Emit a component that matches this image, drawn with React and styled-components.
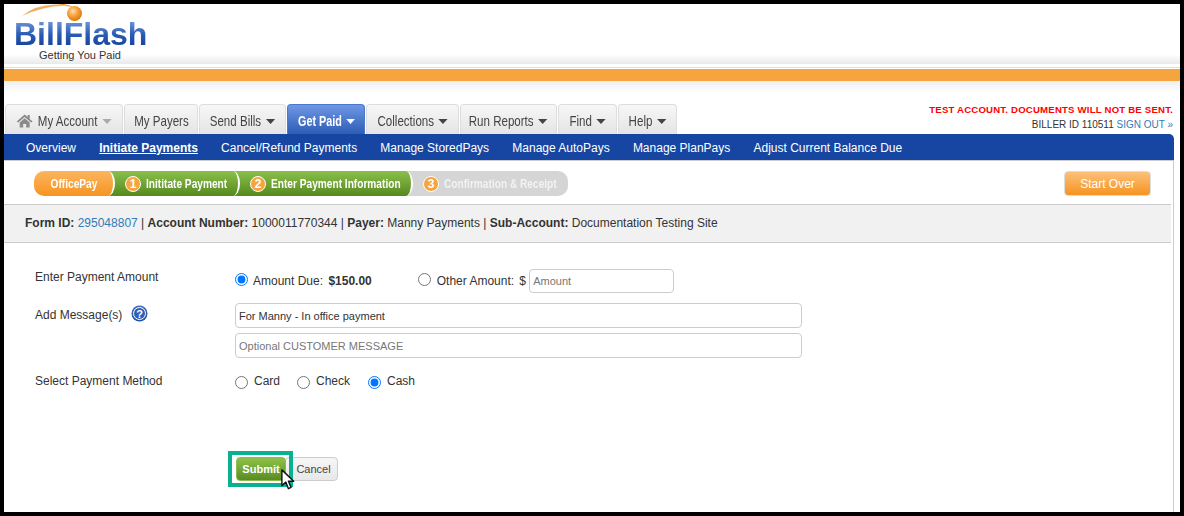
import React from 'react';
import styled, { createGlobalStyle } from 'styled-components';

const Global = createGlobalStyle`
  html, body { margin: 0; padding: 0; background: #fff; }
  body { font-family: "Liberation Sans", Arial, sans-serif; color: #333; }
`;

const Frame = styled.div`
  box-sizing: border-box;
  width: 1184px;
  height: 516px;
  border: 4px solid #000;
  overflow: hidden;
  position: relative;
  background: #fff;
`;

const Header = styled.header`
  height: 60px;
  padding-left: 10px;
  background: linear-gradient(#fff 84%, #e9e9e9 100%);
`;

const Logo = styled.div`
  position: relative;
  width: 140px;
  height: 60px;
`;

const LogoSwoosh = styled.svg`
  position: absolute;
  left: 0;
  top: 0;
`;

const LogoWord = styled.div`
  position: absolute;
  left: 0;
  top: 16px;
  font-size: 32px;
  font-weight: 700;
  line-height: 29px;
  background: linear-gradient(#6f93d8 5%, #2a5cb5 50%, #123c95 100%);
  -webkit-background-clip: text;
  background-clip: text;
  color: transparent;
`;

const LogoTag = styled.div`
  position: absolute;
  left: 25px;
  top: 46px;
  font-size: 11px;
  line-height: 11px;
  color: #333;
`;

const OrangeBar = styled.div`
  height: 12px;
  margin-top: 4px;
  background: #f6a53e;
  border-top: 1px solid #fff;
  box-shadow: 0 1px 0 #ddd, 0 -1px 0 #ddd;
`;

const TopArea = styled.div`
  display: flex;
  justify-content: space-between;
  align-items: flex-end;
  height: 53px;
  background: linear-gradient(#eee 0, #fff 12px);
`;

const Tabs = styled.nav`
  display: flex;
  gap: 1px;
  padding-left: 1px;
`;

const Tab = styled.div`
  box-sizing: border-box;
  width: ${p => p.$w}px;
  height: 30px;
  display: flex;
  align-items: center;
  justify-content: center;
  border: 1px solid ${p => (p.$active ? '#4a78cf' : '#ddd')};
  border-bottom: 0;
  border-radius: 4px 4px 0 0;
  font-size: 15px;
  padding-top: 2px;
  color: ${p => (p.$active ? '#fff' : '#444')};
  background: ${p =>
    p.$active
      ? 'linear-gradient(#6f97e4, #2d5db6)'
      : 'linear-gradient(#f7f7f7, #e4e4e4)'};
  font-weight: ${p => (p.$active ? 700 : 400)};
`;

/* the original tab font is a condensed one, none is installed */
const TabLabel = styled.span`
  flex: none;
  display: inline-flex;
  align-items: center;
  gap: 6px;
  white-space: nowrap;
  transform: scaleX(${p => (p.$active ? 0.72 : 0.77)});
`;

const Caret = styled.span`
  width: 0;
  height: 0;
  margin-top: 1px;
  border-left: 6.5px solid transparent;
  border-right: 6.5px solid transparent;
  border-top: 5px solid ${p => p.$color || '#444'};
`;

const AccountInfo = styled.div`
  width: 270px;
  padding-right: 7px;
  margin-bottom: 1px;
  text-align: right;
  font-size: 10px;
  line-height: 16px;
  color: #333;
`;

const Warning = styled.div`
  margin-bottom: -1px;
  color: #f00;
  font-weight: 700;
  font-size: 9.6px;
  letter-spacing: 0.2px;
`;

const Link = styled.a`
  color: #337ab7;
`;

const SubNav = styled.nav`
  box-sizing: border-box;
  width: 1170px;
  height: 27px;
  display: flex;
  align-items: center;
  gap: 23.2px;
  padding: 1px 0 0 22px;
  background: #1746a2;
  border-bottom: 1px solid #ccc;
  border-radius: 0 5px 0 0;
`;

const SubItem = styled.a`
  color: #fff;
  font-size: 12px;
  font-weight: ${p => (p.$active ? 700 : 400)};
  text-decoration: ${p => (p.$active ? 'underline' : 'none')};
`;

const Content = styled.main`
  box-sizing: border-box;
  width: 1170px;
  height: 400px;
  border-right: 1px solid #ccc;
  padding-top: 10px;
`;

const StepRow = styled.div`
  display: flex;
  align-items: center;
  justify-content: space-between;
  height: 25px;
  padding: 0 22px 0 30px;
`;

const Steps = styled.div`
  display: flex;
  width: 534px;
  height: 25px;
  border-radius: 10px;
  overflow: hidden;
  font-size: 13px;
  font-weight: 700;
  color: #fff;
`;

const stepBg = {
  orange: 'linear-gradient(#fcb55f, #f69420)',
  green: 'linear-gradient(#8cc04a, #55891f)',
  grey: '#d5d5d5',
};

const Step = styled.div`
  box-sizing: border-box;
  position: relative;
  z-index: ${p => p.$z};
  flex: ${p => (p.$w ? `0 0 ${p.$w}px` : '1')};
  min-width: 0;
  display: flex;
  align-items: center;
  justify-content: ${p => (p.$center ? 'center' : 'flex-start')};
  gap: 5px;
  margin-left: ${p => (p.$first ? 0 : -10)}px;
  padding-left: ${p => (p.$first ? 0 : 20)}px;
  background: ${p => stepBg[p.$tone]};
  color: ${p => (p.$tone === 'grey' ? '#f2f2f2' : '#fff')};
  border-right: ${p => (p.$last ? 0 : '2px solid #fff')};
  border-radius: ${p => (p.$last ? 0 : '0 7px 7px 0 / 0 50% 50% 0')};
`;

const StepText = styled.span`
  flex: none;
  white-space: nowrap;
  transform-origin: ${p => (p.$center ? 'center' : 'left')};
  transform: scaleX(0.78);
`;

const StepNum = styled.span`
  flex: none;
  width: 14px;
  height: 14px;
  border-radius: 50%;
  background: #f6a53e;
  border: 1px solid #fff;
  font-size: 12px;
  line-height: 14px;
  text-align: center;
  color: #fff;
`;

const StartOver = styled.button`
  box-sizing: border-box;
  width: 87px;
  height: 25px;
  margin-left: auto;
  border: 1px solid #ddd;
  border-radius: 4px;
  background: linear-gradient(#fcc07a, #f69420);
  color: #fff;
  font-family: inherit;
  font-size: 12px;
  padding: 0;
`;

const InfoBar = styled.div`
  box-sizing: border-box;
  width: 1167px;
  height: 39px;
  margin-top: 8px;
  display: flex;
  align-items: center;
  padding: 0 0 2px 21px;
  background: #f1f1f1;
  border-top: 1px solid #ccc;
  border-bottom: 1px solid #ccc;
  font-size: 12px;
  color: #333;
  white-space: pre;
`;

const Form = styled.form`
  display: grid;
  grid-template-columns: 200px 1fr;
  padding: 26px 0 0 31px;
  font-size: 12px;
  color: #333;
`;

const Label = styled.div`
  display: flex;
  align-items: center;
  gap: 8px;
  height: 16px;
  line-height: 16px;
  margin-top: ${p => p.$mt || 0}px;
`;

const Field = styled.div`
  display: flex;
  align-items: center;
  margin-top: ${p => p.$mt || 0}px;
`;

const MessageFields = styled.div`
  display: flex;
  flex-direction: column;
  align-items: flex-start;
  gap: 5px;
  margin-top: 10px;
`;

const RadioWrap = styled.label`
  display: flex;
  align-items: center;
  gap: ${p => p.$gap || 6}px;
  margin-right: ${p => p.$mr || 0}px;
`;

const RadioDot = styled.input.attrs({ type: 'radio' })`
  width: 13px;
  height: 13px;
  margin: ${p => (p.$raised ? '0 0 3px' : '4px 0 0')};
  accent-color: #0075ff;
`;

const Amount = styled.b`
  margin-left: 2px;
`;

const TextBox = styled.input`
  box-sizing: border-box;
  width: ${p => p.$w}px;
  height: ${p => p.$h || 25}px;
  padding: 0 3px;
  border: 1px solid #ccc;
  border-radius: 4px;
  font-family: inherit;
  font-size: 11px;
  color: #333;
  outline: none;
  &::placeholder { color: #777; opacity: 1; }
`;

const Buttons = styled.div`
  display: flex;
  align-items: center;
  margin: 68px 0 0 232px;
  position: relative;
  width: 110px;
`;

const Submit = styled.button`
  box-sizing: border-box;
  width: 50px;
  height: 24px;
  padding: 0;
  position: relative;
  z-index: 1;
  border: 1px solid #8dbb50;
  border-radius: 4px;
  background: linear-gradient(#8fc24a, #588c22);
  color: #fff;
  font-family: inherit;
  font-size: 11px;
  font-weight: 700;
`;

const Cancel = styled.button`
  box-sizing: border-box;
  width: 53px;
  height: 24px;
  margin-left: -1px;
  padding: 0 0 0 4px;
  border: 1px solid #ccc;
  border-radius: 4px;
  background: linear-gradient(#f6f6f6, #e8e8e8);
  color: #444;
  font-family: inherit;
  font-size: 11px;
`;

const Highlight = styled.div`
  position: absolute;
  left: -8px;
  top: -6px;
  width: 65px;
  height: 36px;
  box-sizing: border-box;
  border: 4px solid #0bb08f;
  z-index: 2;
`;

const Cursor = styled.svg`
  position: absolute;
  left: 45px;
  top: 12px;
  z-index: 3;
`;

const HelpWrap = styled.span`
  display: flex;
  margin: -4px 0 0 1px;
`;

const HelpIcon = () => (
  <HelpWrap>
    <svg width="17" height="17" viewBox="0 0 17 17">
      <defs>
        <radialGradient id="hb" cx="50%" cy="40%" r="60%">
          <stop offset="0" stopColor="#6d9bea" />
          <stop offset="1" stopColor="#1d4aa8" />
        </radialGradient>
      </defs>
      <circle cx="8.5" cy="8.5" r="8" fill="url(#hb)" />
      <circle cx="8.5" cy="8.5" r="6" fill="#2d60c0" stroke="#fff" strokeWidth="1" />
      <text x="8.5" y="12.5" textAnchor="middle" fontSize="11" fontWeight="700" fill="#fff" fontFamily="Liberation Sans">?</text>
    </svg>
  </HelpWrap>
);

// stretched wide because the whole tab label is squeezed horizontally
const HomeIcon = () => (
  <svg width="22" height="14" viewBox="0 0 17 14" preserveAspectRatio="none">
    <path d="M8.5 0.5 L0.5 7.5 L2 8.5 L8.5 3 L15 8.5 L16.5 7.5 L13.5 5 V1 H11.5 V3 Z" fill="#8a8a8a" />
    <path d="M3.5 8.5 L8.5 4.2 L13.5 8.5 V13.5 H10 V10 H7 V13.5 H3.5 Z" fill="#8a8a8a" />
  </svg>
);

export default function App() {
  return (
    <Frame>
      <Global />
      <Header>
        <Logo>
          <LogoSwoosh width="80" height="30" viewBox="0 0 80 30">
            <defs>
              <radialGradient id="ball" cx="40%" cy="35%" r="65%">
                <stop offset="0" stopColor="#fde0b0" />
                <stop offset="0.5" stopColor="#f6a13a" />
                <stop offset="1" stopColor="#d9780f" />
              </radialGradient>
            </defs>
            <path d="M8 12 Q28 -4 58 3 Q38 -1 8 12 Z" fill="#f0b060" />
            <path d="M36 0 H50 Q56 1 60 4 Q50 0 36 0 Z" fill="#e8921f" />
            <circle cx="60.5" cy="9.5" r="7.5" fill="url(#ball)" />
          </LogoSwoosh>
          <LogoWord>BillFlash</LogoWord>
          <LogoTag>Getting You Paid</LogoTag>
        </Logo>
      </Header>
      <OrangeBar />
      <TopArea>
        <Tabs>
          <Tab $w={118}><TabLabel><HomeIcon />My Account<Caret $color="#aaa" /></TabLabel></Tab>
          <Tab $w={74}><TabLabel>My Payers</TabLabel></Tab>
          <Tab $w={87}><TabLabel>Send Bills<Caret /></TabLabel></Tab>
          <Tab $w={78} $active><TabLabel $active>Get Paid<Caret $color="#fff" /></TabLabel></Tab>
          <Tab $w={93}><TabLabel>Collections<Caret /></TabLabel></Tab>
          <Tab $w={97}><TabLabel>Run Reports<Caret /></TabLabel></Tab>
          <Tab $w={59}><TabLabel>Find<Caret /></TabLabel></Tab>
          <Tab $w={59}><TabLabel>Help<Caret /></TabLabel></Tab>
        </Tabs>
        <AccountInfo>
          <Warning>TEST ACCOUNT. DOCUMENTS WILL NOT BE SENT.</Warning>
          BILLER ID 110511 <Link>SIGN OUT »</Link>
        </AccountInfo>
      </TopArea>
      <SubNav>
        <SubItem>Overview</SubItem>
        <SubItem $active>Initiate Payments</SubItem>
        <SubItem>Cancel/Refund Payments</SubItem>
        <SubItem>Manage StoredPays</SubItem>
        <SubItem>Manage AutoPays</SubItem>
        <SubItem>Manage PlanPays</SubItem>
        <SubItem>Adjust Current Balance Due</SubItem>
      </SubNav>
      <Content>
        <StepRow>
          <Steps>
            <Step $first $center $tone="orange" $w={81} $z={4}><StepText $center>OfficePay</StepText></Step>
            <Step $tone="green" $w={135} $z={3}><StepNum>1</StepNum><StepText>Inititate Payment</StepText></Step>
            <Step $tone="green" $w={183} $z={2}><StepNum>2</StepNum><StepText>Enter Payment Information</StepText></Step>
            <Step $last $tone="grey" $z={1}><StepNum>3</StepNum><StepText>Confirmation &amp; Receipt</StepText></Step>
          </Steps>
          <StartOver type="button">Start Over</StartOver>
        </StepRow>
        <InfoBar>
          <b>Form ID: </b><Link>295048807</Link> | <b>Account Number: </b>1000011770344 | <b>Payer: </b>Manny Payments | <b>Sub-Account: </b>Documentation Testing Site
        </InfoBar>
        <Form>
          <Label>Enter Payment Amount</Label>
          <Field>
            <RadioWrap $gap={5} $mr={46}><RadioDot $raised name="amt" defaultChecked /><span>Amount Due: <Amount>$150.00</Amount></span></RadioWrap>
            <RadioWrap $mr={5}><RadioDot $raised name="amt" /><span>Other Amount:</span></RadioWrap>
            <span>$&nbsp;</span>
            <TextBox $w={145} $h={24} placeholder="Amount" />
          </Field>
          <Label $mt={14}>Add Message(s) <HelpIcon /></Label>
          <MessageFields>
            <TextBox $w={567} defaultValue="For Manny - In office payment" />
            <TextBox $w={567} placeholder="Optional CUSTOMER MESSAGE" />
          </MessageFields>
          <Label $mt={15}>Select Payment Method</Label>
          <Field $mt={14}>
            <RadioWrap $mr={17}><RadioDot name="pm" />Card</RadioWrap>
            <RadioWrap $mr={18}><RadioDot name="pm" />Check</RadioWrap>
            <RadioWrap><RadioDot name="pm" defaultChecked />Cash</RadioWrap>
          </Field>
        </Form>
        <Buttons>
          <Highlight />
          <Submit type="button">Submit</Submit>
          <Cancel type="button">Cancel</Cancel>
          <Cursor width="14" height="21" viewBox="0 0 16 24">
            <path d="M1 1 V19 L5.5 15 L8.5 22.5 L11.5 21 L8.5 14 H14.5 Z" fill="#fff" stroke="#111" strokeWidth="1.6" strokeLinejoin="round" />
          </Cursor>
        </Buttons>
      </Content>
    </Frame>
  );
}
